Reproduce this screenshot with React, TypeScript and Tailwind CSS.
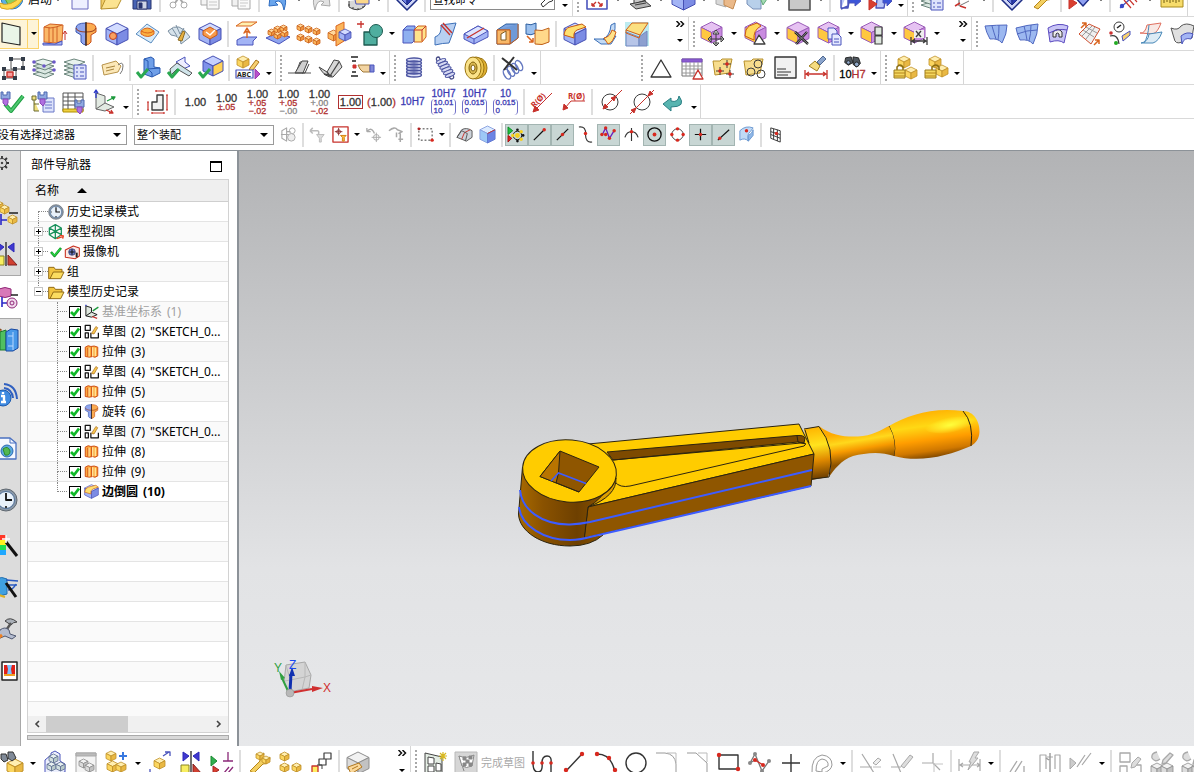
import type { ReactNode } from 'react'
import clsx from 'clsx'

const K = '#3c3c3c'
const B = '#4a54bc'
const R = '#c8322c'
const O = '#d9641e'
const G = '#a9a9a9'

const tones = {
  gold: ['#ffeeb0', '#fbd660', '#e9b843', '#bf9028'],
  blue: ['#d3dcff', '#a3b4f5', '#7c8ce4', '#4650b4'],
  orange: ['#ffd79a', '#fbb65c', '#f0933c', '#cc6420'],
  purple: ['#e6c2f2', '#ffc840', '#c98be0', '#9a5cb8'],
  gray: ['#f2f2f2', '#dcdcdc', '#c2c2c2', '#8e8e8e'],
  mixed: ['#c5d0ff', '#7f92ea', '#ffd257', '#4650b4'],
  steel: ['#e6efef', '#d0dede', '#b9caca', '#5c6c90']
}

const p = (d: string, stroke = K, fill = 'none', width = 1) => (
  <path d={d} stroke={stroke} fill={fill} strokeWidth={width} strokeLinejoin="round" />
)

const box = (x: number, y: number, s: number, tone: keyof typeof tones) => {
  const [top, left, right, edge] = tones[tone]
  const q = s / 4
  return (
    <g stroke={edge} strokeWidth={s > 12 ? 1 : 0.8} strokeLinejoin="round">
      <path fill={top} d={`M${x} ${y + q}L${x + 2 * q} ${y}L${x + s} ${y + q}L${x + 2 * q} ${y + 2 * q}Z`} />
      <path fill={left} d={`M${x} ${y + q}L${x + 2 * q} ${y + 2 * q}V${y + s}L${x} ${y + 3 * q}Z`} />
      <path fill={right} d={`M${x + s} ${y + q}L${x + 2 * q} ${y + 2 * q}V${y + s}L${x + s} ${y + 3 * q}Z`} />
    </g>
  )
}

const dot = (x: number, y: number, fill = '#d8281e', r = 1.8) => <circle cx={x} cy={y} r={r} fill={fill} />
const ring = (x: number, y: number, r: number, stroke = K, fill = 'none') => (
  <circle cx={x} cy={y} r={r} stroke={stroke} fill={fill} />
)

const tick = <>{p('M2 12l7 8L22 4', '#0c8a24', 'none', 5)}{p('M3 13l6 6L21 5', '#28d040', 'none', 3)}</>
const folder = p('M2 5h7l2-2h10l-3 14-14 2z', '#b7902c', '#f7dd8d')
const clip = <>{p('M1 2h2v3h4V2h3v7H1z', '#4f68b0', '#8fa9e0')}{p('M3 9h5v4l-2 3-3-3z', '#8a48b8', '#b070e0')}</>
const wrench = p('M3 20L13 10q-2-6 4-8l-1 5 3 2 4-3q0 7-7 7L7 22z', '#b5851a', '#f3cf60')
const layers = (
  <>
    {p('M1 18l10-3 11 3-9 4z', '#6b857c', '#dbe8e2')}
    {p('M1 14l10-3 11 3-9 4z', '#6b857c', '#dbe8e2')}
    {p('M1 10l10-3 11 3-9 4z', '#6b857c', '#cfe0d8')}
    {p('M1 6l10-3 11 3-9 4z', '#6b857c', '#e8f3ee')}
  </>
)

const glyphs: Record<string, ReactNode> = {
  start: <>{ring(13, 11, 11, '#2c78b8', '#5ab0e6')}{p('M5 10q6-5 14 2-1 8-8 9z', '#4e9e3a', '#8ccf5c')}{p('M0 16q12 5 23-8l1 4Q15 26 2 21z', '#d9a41c', '#ffd94e')}</>,
  newFile: p('M4 1h12l4 4v17H4z', '#6a6abf', '#eef0ff'),
  open: <>{p('M2 5h7l2 2h8v4L2 22z', '#b7902c', '#f2cf6a')}{p('M2 22l5-11h16l-5 10z', '#b7902c', '#fbe391')}</>,
  save: <>{p('M3 2h18v20H3z', '#28356e', '#4864b4')}{p('M7 14h10v8H7z', '#28356e', '#cfd6e6')}{p('M9 16h3v5H9z', '#28356e', '#28356e')}</>,
  cut: <>{p('M6 2l10 14M18 2L8 16', G, 'none', 2)}{ring(6, 18, 3, G)}{ring(17, 18, 3, G)}</>,
  copy: <>{p('M3 2h10v16H3z', G, '#f4f4f4')}{p('M9 7h12v15H9z', G, '#f8f8f8')}{p('M11 12h8M11 15h8M11 18h8', '#c8c8c8')}</>,
  paste: <>{p('M3 3h14v16H3z', G, '#f1f1f1')}{p('M9 8h12v14H9z', G, '#fafafa')}{p('M11 13h8M11 16h8M11 19h6', '#c8c8c8')}</>,
  undo: p('M4 10l-1 9 9-1-3-3q7-4 9 8Q24 4 8 11z', '#2f6cc0', '#6aa5ec'),
  redo: p('M20 10l1 9-9-1 3-3q-7-4-9 8Q0 4 16 11z', G, '#e2e2e2'),
  view: <>{p('M3 14v6q9 6 16-1v-7', K, '#d8d8d8', 1)}{p('M7 4h16v13H10z', B, '#fbd78a')}{p('M2 18h2m2 3h2m3 1h2m3-2h2', K)}</>,
  diamond: <>{p('M2 13l10-10 10 10-10 10z', '#1d2d86', '#cfd6f6', 1.5)}{p('M7 13l5-5v10z', '#1d2d86', '#6f80e0')}{p('M17 13l-5-5v10z', '#1d2d86', '#2a3bb0')}</>,
  fit: <>{p('M2 2h20v20H2z', B, '#fff', 1.6)}{p('M7 19l4-4M7 19v-3m0 3h3M17 19l-4-4M17 19v-3m0 3h-3', R, 'none', 1.4)}</>,
  laptop: <>{p('M6 4l12-3v12l-12 4z', K, '#c9c9c9')}{p('M2 17l6 5 15-3-6-5z', K, '#b5b5b5')}{p('M7 18l11-2', K)}</>,
  shaded: box(1, 0, 23, 'blue'),
  clipA: <>{p('M2 6l10-4v18l-10-3z', G, '#d8d8d8')}{p('M10 10l12 3-3 9-9-4z', '#c48a50', '#eab98a')}</>,
  clipB: <>{p('M2 6l14-4v20h-8l-6-5z', '#7890b8', '#b8d0ea')}{p('M14 8l8 4-4 6z', '#60a878', '#a5dbb4')}</>,
  swatch: p('M1 1h21v22H1z', '#555', '#c9c9c9', 1.6),
  exit: <>{p('M4 3h10l-3 18H4zM4 22l7-3V4', B, '#b9c6f7', 1.4)}{p('M12 12h6V9l6 5-6 5v-3h-6z', B, '#3c55d8')}</>,
  exitGo: <>{p('M10 3h9l-3 18H8z', B, '#b9c6f7', 1.4)}{p('M1 12l8 5-8 6z', R, '#d84030')}{p('M15 12h4V9l5 5-5 5v-3h-4z', B, '#3c55d8')}</>,
  layerList: <>{layers}{p('M11 9h12v14H11z', B, '#dde2fb')}{p('M13 12h2m2 0h4m-8 4h2m2 0h4m-8 4h2m2 0h4', B, 'none', 1.2)}</>,
  axes: <>{p('M8 4v15l10-5', '#777')}{p('M8 4v15M12 4l6 3', '#999')}{p('M4 19l5-3m0 3l6 2', R, 'none', 1.5)}</>,
  measure: <>{p('M2 3v6m20-6v6M3 6h18M6 4L3 6l3 2m12-4l3 2-3 2', R, 'none', 1.3)}{p('M1 12h22v8H1z', '#a98b1c', '#f7dc6b')}{p('M4 12v4m3-4v3m3-3v4m3-4v3m3-3v4m3-4v3', '#705c10')}</>,
  wrench,
  goDiamond: <>{p('M6 9l9-9 9 9-9 10z', '#1d2d86', '#8fa0f0', 1.4)}{p('M1 11l8 5-8 6z', R, '#d84030')}</>,
  needles: <>{p('M3 21L22 4', B, 'none', 1.3)}{p('M7 13l7 8M10 10l7 8m-4-11l7 8', R, 'none', 1.2)}{dot(5, 19, '#3848c8', 2.2)}</>,

  plane: p('M3 1l18 4v18L3 20z', '#222', '#eaf5e8', 1.2),
  extrude: <>{p('M1 5l6-3 13 1-1 16-6 2-12-1z', '#d06024', '#fbb868')}{p('M6 5v15M10 6v14M14 5v15M1 5l6 1 6-1 6-2', '#d06024')}{p('M0 21l12 1 7-3v4H0z', B, '#a3b4f5')}{p('M22 9v9m-2-6l2-3 2 3', R)}</>,
  revolve: <>{p('M12 1Q2 1 2 6v4l5 3v7q2 3 5 3z', '#3c58b0', '#8fa5ee')}{p('M12 1q10 0 10 5v4l-5 3v7q-2 3-5 3z', '#c8501c', '#fbac50')}{p('M2 6q1 4 10 4t10-4', '#9a4020')}{p('M12 0v24', '#222', 'none', 1.2)}</>,
  hole: <>{box(1, 1, 22, 'blue')}{ring(8, 14, 3.5, '#c04020', '#f9a060')}</>,
  boss: <>{p('M0 12L11 2l12 8-8 11z', '#5b8cc0', '#d8ecfa')}{p('M5 12v-3q6-6 13 0v3q-6 5-13 0z', '#d9641e', '#fbb040')}{p('M5 9q7 4 13 0', '#d9641e')}</>,
  pocketPlate: <>{p('M1 9Q12-2 23 15l-9 7Q14 14 4 13z', '#7c90a2', '#d6e2ea')}{p('M9 3l4 9M17 6l-4 6M5 6l5 8', '#7c90a2')}{p('M11 18l5-9 2 1-3 9z', '#8a6a20', '#e8b040')}</>,
  pocket: <>{box(1, 1, 22, 'blue')}{p('M5 9l7-4 7 4v4l-7 4-7-4z', '#c85a14', '#f99a4a')}{p('M8 10l4 3 5-5', '#fff', 'none', 1.5)}</>,
  emboss: <>{p('M1 4l6-4h15l-6 4z', O, '#fff0b0')}{p('M2 18l6-3h14l-4 4v4H2z', B, '#a3b4f5')}{p('M12 16V9l-3 2 3-5 3 5-3-2', O, 'none', 1.4)}</>,
  bed: <>{p('M0 16l11-5 13 4-11 7z', B, '#8fa5ee')}{box(2, 7, 7, 'orange')}{box(8, 4, 7, 'orange')}{box(14, 3, 7, 'orange')}{box(8, 10, 7, 'orange')}{box(15, 8, 7, 'orange')}</>,
  pattern: <>{box(0, 2, 7, 'orange')}{box(8, 4, 7, 'orange')}{box(16, 6, 7, 'orange')}{box(0, 12, 7, 'orange')}{box(8, 14, 7, 'orange')}{box(16, 16, 7, 'orange')}</>,
  mirrorGeo: <>{box(0, 8, 11, 'orange')}{p('M8 4l8-4v19l-8 5z', O, '#fbb65c')}{box(11, 7, 12, 'blue')}</>,
  unite: <>{p('M5 10h13v13H5z', '#1d5a50', '#4fae9f', 1.3)}{ring(17, 9, 6.5, '#1d5a50', '#4fae9f')}{p('M2-1v7M-2 2h7', R, 'none', 1.3)}</>,
  trimBox: <>{p('M1 8l4-4h8v14l-3 3H1z', B, '#8fb0f0')}{p('M12 8l4-4h8v11l-4 5h-8z', '#d06018', '#ffe38a')}{p('M1 8h11v12', B)}{p('M12 8h8v11M20 8l4-4', R)}</>,
  trimSheet: <>{p('M2 15Q9 13 8 3l15-2q-3 10-7 20Q10 21 2 23z', '#3d70b8', '#b8d0f2')}{p('M10 1l9 10M8 3l9 10', R, 'none', 1.4)}</>,
  split: <>{p('M0 12l14-8 10 5v6l-14 7-10-5z', B, '#a3b4f5')}{p('M0 12l14-8 10 5-14 8z', B, '#dce4ff')}{p('M10 17v5', B)}{p('M3 16L20 6', R, 'none', 1.3)}</>,
  shell: <>{p('M2 8l9-6h12v14l-8 6H2z', '#2c5ea0', '#7da4e0')}{p('M2 8h13v14l8-6V2', '#c05a18', '#6f9ad8')}{p('M2 8h13v14H2z', '#c05a18', '#f8b868')}{p('M6 12l5-3v9H6z', '#7f5a20', '#fff')}</>,
  wrap: <>{p('M0 2q5 2 10-1v10q-5 3-10 1z', '#2c5ea0', '#9bc0ee')}{p('M9 8q7 2 14-2v14q-7 4-14 2z', '#c06018', '#ffd88a')}{p('M1 14l6 6m0-4v4H3', O, 'none', 1.5)}</>,
  edgeBlend: <>{box(1, 1, 22, 'blue')}{p('M1 13Q2 6 7 5l12-3 4 3-9 3q-4 2-3 8z', '#c85a14', '#ffe070')}</>,
  faceBlend: <>{p('M0 17h10l12-3-5 8H7z', '#3d70b8', '#c4dbf5')}{p('M9 17Q16 14 17 3l4-2q1 12-6 19z', '#3d70b8', '#c4dbf5')}{p('M10 16q6-1 8-8l4 2q-3 11-8 12z', '#d06018', '#ffe38a')}</>,
  chamfer: <>{p('M0 0h24v24H0z', 'none', '#bdebf0')}{p('M1 10l13 5v9H1z', '#7088c0', '#b7c5e8')}{p('M14 15l8-6v15h-8z', '#7088c0', '#8da0d0')}{p('M1 8l6-7h16l-8 12z', '#d06018', '#fbe080')}{p('M1 8v3l13 5 1-3', '#d06018')}</>,
  moveFace: <>{box(0, 0, 21, 'purple')}{p('M15 10v14M8 17h14M15 8l-3 4h6zM15 24l-3-3h6zM7 17l3-3v6zM23 17l-3-3v6z', K, '#fff')}</>,
  pullFace: <>{box(1, 0, 21, 'purple')}{p('M1 14Q1 7 5 4l8-3 4 3Q9 8 10 18z', '#c85a14', '#ffd95c')}{p('M10 22l5-9 6 9z', K, '#fff', 1.3)}</>,
  deleteFace: <>{box(0, 0, 22, 'purple')}{p('M8 10l13 12M20 10L9 22', '#222', 'none', 2.4)}{p('M8 10l13 12M20 10L9 22', '#888', 'none', 1)}</>,
  copyFace: <>{box(0, 0, 21, 'purple')}{p('M10 6h6l3 3v8h-9z', B, '#e5e9ff')}{p('M14 12h6l3 3v8h-9z', B, '#e5e9ff')}{p('M16 17h5M16 20h5', B)}</>,
  editSection: <>{box(0, 0, 21, 'purple')}{p('M14 5h7v8h-7zM14 14h7v8h-7z', K, '#dfe8df', 1.2)}</>,
  dimFace: <>{box(0, 0, 21, 'purple')}{p('M10 8h10v8H10z', 'none', '#eee')}{p('M12 9l5 6M17 9l-5 6', K, 'none', 1.3)}{p('M7 15v8M23 15v8M8 19h14M11 17l-3 2 3 2m8-4l3 2-3 2', K, 'none', 1.3)}</>,
  sheetA: <>{p('M1 4q12-1 22-1 0 9-5 18-4-5-12-4Q2 10 1 4z', '#5068c0', '#9cb8f0')}{p('M8 4q2 7 4 13M15 3q0 9-1 15', '#5068c0')}</>,
  sheetB: <>{p('M1 6q11-3 22-4 0 10-5 20-4-5-13-4Q2 12 1 6z', '#5068c0', '#9cb8f0')}{p('M9 4q2 7 3 14M16 3q0 9-2 16M2 12q10-4 20-4', '#5068c0')}</>,
  sheetC: <>{p('M2 6Q12 0 22 4q-2 8-4 17-5-4-14-1Z', '#5a4ac0', '#c8c4f6')}{p('M7 15v-5q5-5 9 0v5h-3v-3q-2-2-3 0v3z', '#333', '#eee')}{p('M3 11q10-5 18-3', '#5a4ac0')}</>,
  sheetD: <>{p('M2 12L12 2l11 5-9 15z', '#d05030', '#f0f0f0')}{p('M5 14L15 4M9 17l9-12M6 8l11 7M9 5l11 6', '#999')}{p('M4 6l5-5m-4 0h4v4M17 23l5-5m-4 0h4v4', O, 'none', 1.5)}</>,
  sheetE: <>{ring(11, 5, 5)}{p('M9 6l4-3', '#222', 'none', 1.5)}{p('M2 14q8-2 9 8', K, 'none', 1.2)}{dot(3, 11, '#c33')}{dot(8, 21, '#2a2', 2)}{p('M14 14l8-5v4l-7 6z', B, '#f6d070')}</>,
  sheetF: <>{p('M1 11q5 1 7-8l14-2q-3 9-8 11z', '#e07060', '#f8e8e4')}{p('M2 21q7-1 8-9l13-2q-3 9-9 11z', '#4888b8', '#dcebf5')}{p('M10 3q-1 12-5 18', '#4888b8')}</>,
  sheetG: <>{p('M1 6q7 3 10-2 5-4 13 0-1 4-2 12-8-2-10 4-7 3-8-4z', '#555', '#e0e0e0')}{p('M11 14q6-5 12-2l-2 5q-7-2-9 5z', B, '#a3b4f5')}</>,

  group: <>{p('M3 14h12v8H3zM10 3h12v10H10z', '#555')}{p('M6 16h6v5H6z', R, '#f8a0a0', 1.4)}{[[3, 13], [14, 13], [3, 22], [14, 22], [10, 3], [22, 3], [22, 12]].map(([x, y]) => <rect key={`${x}-${y}`} x={x - 2} y={y - 2} width="4" height="4" fill="#333c48" />)}</>,
  layers: <>{layers}{dot(2, 6, '#6b58c8')}{dot(22, 6, '#6b58c8')}{dot(2, 14, '#6b58c8')}{dot(22, 14, '#6b58c8')}{dot(12, 10, '#6b58c8')}</>,
  tag: <>{p('M2 9l14-4 5 5-3 6-14 3z', '#b8944c', '#fce8b8')}{p('M6 12l9-2M6 15l8-2', '#a8843c')}{p('M18 9q5-4 5 1t-3 8', '#777')}</>,
  partOk: <>{p('M7 3l7-2 3 2v8l6 1v5l-8 4-8-3z', '#2858b0', '#6f9fe8')}{p('M7 3l4 2v8l12-1M11 13l4 4v4', '#2858b0')}{p('M0 16l4 5 7-8', '#2aa850', 'none', 3)}</>,
  paintOk: <>{p('M8 6l9-5v5l5 4-7 3-4-5z', B, '#eef')}{p('M2 13l7-6 15 10-3 3-12-7-6 6z', '#555', '#d0e4ea')}{p('M0 16l4 5 7-8', '#2aa850', 'none', 3)}</>,
  boxOk: <>{box(4, 0, 20, 'mixed')}{p('M0 16l4 5 7-8', '#2aa850', 'none', 3)}</>,
  abc: <>{box(1, 0, 12, 'gold')}{p('M14 12l6-8 3 2-6 8-4 1z', '#a8741c', '#f7d070')}{p('M0 14h17v8H0z', B, '#fff', 1.2)}<text x="1" y="21" fontSize="7" fontWeight="700" fill="#222">ABC</text>{p('M19 13l5 5-5 5z', '#9a38b0', '#b850cc')}</>,
  weldA: <>{p('M0 17h8l4-11h8M14 17h9', '#555')}{p('M7 17L14 5h6l-5 12z', '#444', '#cfcfcf')}{p('M8 17h9l4-9', '#444')}</>,
  weldB: <>{p('M0 11l8 5L15 4l5 1 3 6-9 10q-8 1-14-10z', '#444', '#d6d6d6')}{p('M8 16l3 4 9-14M5 18l8 2', '#444', 'none', 1.3)}</>,
  hand: <>{p('M1 1h7M2 5h4M2 16h4M1 20h7', '#222', 'none', 1.6)}{p('M3 9h3v3H3z', R, '#d83030')}{p('M8 9h9l3 0v7h-7l-3-3z', '#a07838', '#f2d4a2')}{p('M20 9h4v7h-4z', B, '#8088d8')}</>,
  spring: <>{p('M4 3v18h15V3z', 'none', '#dfe2f8')}{[4, 7, 10, 13, 16, 19].map(y => <ellipse key={y} cx="12" cy={y} rx="7.5" ry="2" fill="none" stroke="#4a53a0" strokeWidth="1.3" />)}</>,
  springB: <>{p('M4 5q-2-4 2-4l2 4M15 20l3 3q4 0 2-4', '#4a4f88', 'none', 1.3)}{[0, 1, 2, 3, 4, 5].map(i => <ellipse key={i} cx={8 + i * 1.8} cy={5 + i * 2.8} rx="5" ry="1.7" transform={`rotate(-22 ${8 + i * 1.8} ${5 + i * 2.8})`} fill="#d5d8f2" stroke="#4a53a0" />)}</>,
  disc: <><ellipse cx="15" cy="12" rx="8" ry="10" fill="#e0b030" stroke="#9a7410" /><ellipse cx="12" cy="12" rx="8" ry="11" fill="#ecc650" stroke="#9a7410" /><ellipse cx="9" cy="12" rx="8" ry="11" fill="#fbe38a" stroke="#9a7410" /><ellipse cx="9" cy="12" rx="4" ry="6" fill="#d9b850" stroke="#806008" /><ellipse cx="9" cy="12" rx="2" ry="3" fill="#fff" stroke="#806008" /></>,
  springCut: <>{[0, 1, 2, 3].map(i => <ellipse key={i} cx={6 + i * 4} cy={18 - i * 2.8} rx="3" ry="5.5" transform={`rotate(-28 ${6 + i * 4} ${18 - i * 2.8})`} fill="none" stroke="#6478c0" strokeWidth="1.4" />)}{p('M1 2l15 12M13 1L3 14', '#333', 'none', 2)}</>,
  triangle: p('M2 21L12 4l10 17z', '#333', '#fff', 1.3),
  grid: <>{p('M2 3h20v17H2z', '#777', '#fff')}{p('M2 3h20v3H2z', '#7a4cc0', '#8a5cd0')}{p('M2 10h20M2 13h20M2 17h20M6 6v14M10 6v14M14 6v14M18 6v14', '#999')}{p('M13 23l5-9 5 9z', R, '#fff', 1.3)}</>,
  folderPts: <>{folder}{p('M16 4v8m-4-4h8M9 11v8m-4-4h8M19 14v8m-4-4h8', K)}{dot(16, 8)}{dot(9, 15)}{dot(19, 18)}</>,
  folderRings: <>{folder}{ring(16, 8, 4)}{ring(9, 16, 4)}{ring(19, 18, 4)}</>,
  note: <>{p('M2 1h21v21H2z', '#333', '#f1f1f1', 1.4)}{p('M4 13h9M4 16h14M4 19h11', '#333', 'none', 1.2)}</>,
  brush: <>{p('M13 6l6-6 3 3-6 6z', '#506890', '#8aa4cc')}{p('M5 10l6-5 5 5-3 5z', '#a08020', '#f5dc80')}{p('M1 14v9m22-9v9M2 18h20M5 16l-3 2 3 2m14-4l3 2-3 2', R, 'none', 1.3)}</>,
  lockA: <>{box(5, 0, 12, 'gold')}{box(12, 11, 12, 'gold')}{p('M4 14v-3q3-4 6 0v3', '#8a6c10', 'none', 1.5)}{p('M1 14h11v8H1z', '#9a7c20', '#f4d860')}{p('M1 17h11M1 20h11', '#b5851a')}</>,
  lockB: <>{box(5, 0, 12, 'gold')}{box(12, 9, 12, 'gold')}{p('M8 14v-3q4-4 7 0v3', '#8a6c10', 'none', 1.5)}{p('M1 14h11v8H1z', '#9a7c20', '#f4d860')}{p('M1 17h11M1 20h11', '#b5851a')}</>,

  clipOk: <>{p('M5 14l6 7L23 6', '#1fa044', 'none', 4)}{p('M5 14l6 7L23 6', '#4fc870', 'none', 2)}{clip}</>,
  clipTree: <>{p('M1 6h4v4H1zM3 10v11h5M3 14h5', '#6a6a30', '#f0e080')}{p('M12 8h11v14H12z', '#6a78c8', '#dde3fb')}{p('M14 12h7M14 15h7M14 18h7', '#6a78c8')}<g transform="translate(6 0)">{clip}</g></>,
  clipTable: <>{p('M1 3h20v18H1z', '#555', '#fff')}{p('M1 19h20v3H1z', '#b09000', '#f0d040')}{p('M1 7h20M1 11h20M1 15h20M6 3v16M13 3v16', '#555')}<g transform="translate(12 8)">{clip}</g></>,
  datum: <>{p('M3 3v16l9-6V6zM3 19l9 2 9-4-9-4', '#666', '#e2eae2')}{p('M3 8V0M1 3l2-3 2 3', '#2a38c8', 'none', 1.3)}{p('M14 11l8-4m-4 0l4 0-2 3', '#1c9a3c', 'none', 1.3)}{p('M13 20l7 3m-2-3l2 3-4 0', R, 'none', 1.3)}</>,
  profileDim: <>{p('M7 20v-8h5V5h6v15z', K, '#f1f1f1', 1.4)}{p('M11 1h8m-8-1v2m8-2v2M22 5v15m-1-15h2m-2 15h2M3 12v8m-1-8h2m-2 8h2M7 23h12m-12-1v2m12-2v2', R, 'none', 1.2)}</>,
  radA: <>{p('M21 3L3 21', R)}{p('M2 22l2-6 4 4z', R, R)}<text x="1" y="15" fontSize="8" fontWeight="700" fill={R} transform="rotate(-45 6 14)">R(Ø)</text></>,
  radB: <>{p('M23 11H9l-6 7', R)}{p('M1 20l1-6 4 4z', R, R)}<text x="6" y="9" fontSize="8" fontWeight="700" fill={R}>R(Ø)</text></>,
  diaIn: <>{ring(11, 12, 8)}{p('M5 18L23 0', R)}{p('M4 19l2-5 3 3zM17 6l-5 2 3 3z', R, R)}</>,
  diaOut: <>{ring(12, 12, 8)}{p('M0 24L24 0', R)}{p('M6 18l-5 2 3 3zM18 6l5-2-3-3z', R, R)}</>,
  back: p('M2 14l8-6v3q7 2 8-5 8 11-8 11v4z', '#2b7f84', '#58b4b0'),

  person: <>{box(7, 8, 16, 'gold')}{p('M1 3h5l2 6-4 2-3-3zM8 1h5l3 6-4 3-4-3z', '#333', '#808a98')}</>,
  parts: <>{p('M2 9l6-5V2l4-2 5 3v7l5 3v8l-7 2H2z', B, '#eceffd')}{box(6, 3, 9, 'steel')}{box(4, 11, 9, 'steel')}{box(13, 11, 9, 'steel')}</>,
  partsOff: <>{p('M2 2h20v21H2z', G, '#f4f4f4')}{p('M2 2h20v3H2z', G, '#bbb')}{box(5, 8, 9, 'gray')}{box(11, 12, 9, 'gray')}</>,
  addPart: <>{box(1, 0, 10, 'gold')}{box(2, 10, 11, 'gold')}{box(11, 11, 10, 'gold')}{p('M18 1v8M14 5h8', '#3878e0', 'none', 2)}</>,
  movePart: <>{box(6, 7, 11, 'gold')}{p('M15 5l6-4m-4 0h5v4M8 22l-6 0v-4', B, 'none', 1.3)}</>,
  mirror: <>{p('M4 1v9l6-5zM20 1v9l-6-5z', '#2a28b8', '#4038d0')}{p('M12 0v24', '#222', 'none', 1.3)}{p('M2 14h8v9H2z', '#8a8420', '#f8ee60')}{p('M14 13l9 10h-9z', '#802020', '#d04030')}</>,
  constrain: <>{p('M1 5l6 5-6 5z', '#1c8a30', '#30b050')}{p('M3 15l6 4-6 4z', '#a02020', '#d84030')}{p('M18 1v9M13 10h10M14 22l5-6M18 22l5-6', '#8a2878', 'none', 1.3)}</>,
  wrenchPart: <>{wrench}{box(9, 1, 8, 'gold')}{box(15, 5, 8, 'gold')}</>,
  threeParts: <>{box(2, 1, 9, 'gold')}{box(2, 12, 9, 'gold')}{box(14, 12, 9, 'gold')}</>,
  chain: <>{p('M15 2h7v6h-7zM10 8h7v6h-7z', K, '#fff', 1.2)}{p('M3 15h6v7H3z', R, '#ffee60', 1.3)}{p('M8 14h5v4', K)}</>,
  boxNote: <>{box(1, 1, 22, 'gray')}{p('M2 16l11-4 3 4-11 7z', '#b07820', '#fbd89a')}{p('M6 18l6-3', '#b07820')}</>,
  sketch: <>{p('M2 2l17 4v18H2z', '#444', '#e4ede4')}{p('M5 6l6 1v6H5zM5 15h6v6H5zM13 12l5 1v7h-5z', '#444', '#fff')}{p('M20 1v9M16 5h8M17 2l6 6M23 2l-6 6', '#d8b820', 'none', 1.2)}</>,
  flag: <>{p('M1 1h22v22H1z', '#b8b8b8', '#d6d6d6')}{p('M5 5l5 15', '#888')}{p('M5 5q8 3 15-1l-2 11q-6 3-10 0z', '#888', '#fff')}{p('M9 6h3v3H9zM15 5h3v3h-3zM12 9h3v3h-3zM9 12h3v3H9zM15 12h3v3h-3z', '#888', '#888')}</>,
  spline: <>{p('M2 0v12q0 9 5 9t4-9q0-7 5-7t4 7v10', '#333', 'none', 1.4)}{dot(2, 12)}{dot(11, 12)}{dot(20, 12)}</>,
  line: <>{p('M4 20L20 3', '#333', 'none', 1.4)}{dot(20, 3, '#d8281e', 2.2)}{dot(4, 19, '#d8281e', 2.2)}</>,
  arc: <>{p('M4 3q15 0 18 19', '#333', 'none', 1.4)}{dot(4, 3, '#d8281e', 2.2)}{dot(16, 7, '#d8281e', 2.2)}{dot(22, 19, '#d8281e', 2.2)}</>,
  circle: <circle cx="12" cy="12" r="10" fill="none" stroke="#333" strokeWidth="1.4" />,
  fillet: <>{p('M1 2h9q10 1 11 11v9', '#999')}{p('M12 2h9v10', '#bbb')}</>,
  chamferLine: <>{p('M1 2h9l11 10v10', '#999')}{p('M12 2h9v9', '#bbb')}</>,
  rect: <>{p('M2 4h19v14H2z', '#333', 'none', 1.4)}{dot(2, 4, '#d8281e', 2.2)}{dot(21, 18, '#d8281e', 2.2)}</>,
  poly: <>{p('M2 12l5-9 7 17 7-10M2 12l5-3', '#777', 'none', 1.3)}{p('M7 9l8 5', R, 'none', 1.4)}{dot(2, 12, '#888', 2)}{dot(7, 3, '#888', 2)}{dot(7, 9, '#d8281e', 2)}{dot(15, 14, '#d8281e', 2)}{dot(21, 10, '#888', 2)}{dot(14, 20, '#888', 2)}</>,
  plus: p('M12 3v18M3 12h18', '#333', 'none', 1.4),
  offset: <>{p('M2 22q-1-16 10-18 10 1 10 10-1 6-9 8z', '#999')}{p('M6 20q0-11 6-12 7 1 6 7l-6 3v3z', '#999')}</>,
  trim: <>{p('M3 3l12 19M1 16h12', G, 'none', 1.2)}{p('M14 12l5-5 3 2-5 5z', G, '#eee')}{p('M14 16h8', '#bbb')}</>,
  extend: <>{p('M3 3l8 19M1 16h10', G, 'none', 1.2)}{p('M11 15l9-11 3 2-9 11z', G, '#ddd')}</>,
  corner: <>{p('M1 12h11l7 7M12 2v10', G, 'none', 1.2)}{p('M12 13h10M13 12v10', '#c4c4c4')}</>,
  autoDim: <>{p('M1 8v12M22 8v12M2 14h20M5 12l-3 2 3 2m14-4l3 2-3 2', G, 'none', 1.2)}{p('M11 11l5-10 5 0-4 6h3L10 19l3-8z', G, '#ddd')}</>,
  parallel: p('M3 21l7-11M8 21l7-11M17 22v-7', G, 'none', 1.3),
  symmetric: <>{p('M2 22V4h6v14M22 22V4h-5v14M9 6h6', G, 'none', 1.2)}{p('M12 2v22M8 7l3 2', '#999', 'none', 1.4)}</>,
  goParallel: <>{p('M1 7l6 5-6 6z', G, '#ccc')}{p('M8 16l8-12M13 14L22 2', G, 'none', 1.2)}</>,
  sketchOff: <>{p('M2 2h10v9H2zM2 15h7v8H2zM14 14h9v9', G, 'none', 1.3)}{p('M14 12l6-6 3 2-6 8-4 1z', G, '#ddd')}</>,
  replace: <>{p('M8 1q-6 1-5 6 3 5 8 1M14 9l7-7 3 2-7 8-4 1z', G, '#ddd', 1.3)}{box(2, 12, 12, 'gray')}{box(12, 12, 12, 'gray')}</>,

  navGear: <>{ring(12, 12, 4.5, '#333')}{ring(12, 12, 0.8, '#333', '#333')}{p('M12 5v2M12 17v2M5 12h2M17 12h2M7 7l2 2M15 15l2 2M7 17l2-2M15 9l2-2', '#333', 'none', 1.8)}</>,
  navAssembly: <>{box(0, 1, 9, 'gold')}{box(6, 5, 9, 'gold')}{p('M15 13h9', '#111', 'none', 1.4)}{p('M7 14v11M7 20h6', '#2a28c8', 'none', 1.6)}{box(14, 15, 9, 'gold')}</>,
  navPart: <>{p('M5 4q6-3 12 0v7q-6 3-12 0z', '#902878', '#d878b8')}{p('M17 10h7', '#111', 'none', 1.4)}{p('M8 12v10M8 18h6', '#2a28c8', 'none', 1.6)}{ring(18, 18, 5, '#902878', '#f0d8ec')}{ring(18, 18, 2, '#902878')}</>,
  navBooks: <>{p('M1 4l6-3v20H1z', '#804010', '#f0a060')}{p('M6 4l6-2v20H6z', '#1c7a2c', '#50c060')}{p('M12 4l5-3 7 1v18l-5 3h-7z', '#1848a0', '#4898e8')}{p('M14 8h5M14 18h5M19 4v18', '#b8d8ff')}</>,
  navInfo: <>{ring(9, 15, 8, '#1c5cb0', '#3f8ae0')}{p('M9 9v2m-2 2h3v6m-3 0h5', '#fff', 'none', 2.4)}{p('M10 1q12 1 13 15M10 5q8 1 9 10', '#3060c0', 'none', 2)}</>,
  navWeb: <>{p('M2 1h14l6 5v16H2z', '#4a70c0', '#f5f8ff', 1.3)}{ring(13, 14, 6, '#2a6ab0', '#5ca8e0')}{p('M9 12q5-4 7 2 0 5-5 4z', '#2c8a30', '#54b850')}{p('M16 1v5h6', '#4a70c0')}</>,
  clock: <>{ring(12, 12, 11, '#606870', '#8a98a8')}{ring(12, 12, 8.5, '#4f6f98', '#e8f1fa')}{p('M12 5v7h6', '#111', 'none', 1.8)}{p('M12 18v2M5 12h1', '#111', 'none', 1.6)}</>,
  navPalette: <>{p('M0 2h12v5H0z', 'none', '#ff3828')}{p('M0 7h12v5H0z', 'none', '#fff020')}{p('M0 12h12v5H0z', 'none', '#20e050')}{p('M0 17h12v5H0z', 'none', '#20a8ff')}{p('M12 9l11 14', '#111', 'none', 3)}{p('M12 2v8M8 6h8', '#fff', 'none', 1.4)}</>,
  navScene: <>{p('M2 4q6-3 11 0v15q-6 3-11 0z', '#2470b0', '#40a0e0')}{p('M12 5l12 1M14 10h9M14 15q5 0 8-6', '#2858c0', 'none', 1.6)}{p('M12 8l10 14', '#111', 'none', 3)}{p('M5 20l6 2', '#e0b020', 'none', 2)}</>,
  navTools: <>{p('M11 4q5-5 12 1-4 0-6 3z', '#444', '#aab0b8')}{p('M17 6l-6 9', '#555', 'none', 2.4)}{p('M6 13q5-4 9 0l1 4 6 2-4 3-7-3-7 3q0-5 2-9z', '#4f5870', '#b4bccf')}{p('M3 22l5-4', '#f08020', 'none', 3)}</>,
  navMedia: <>{p('M4 4l-3 3v13l3 3z', '#444', '#ddd')}{p('M8 3h15v18H8z', '#222', '#fff', 1.5)}{p('M10 6h11v10H10z', 'none', '#e02018')}{p('M13 6h5l-1 4 1 6h-5l1-6z', 'none', '#7cc4ff')}{p('M10 16h11', '#f0a020', 'none', 2)}</>,

  modelView: <>{p('M2 6l9-5 9 5v10l-9 6-9-6zM2 6l9 5 9-5M11 11v10M11 2v9M2 16l9-5 9 5', '#16905a', 'none', 1.9)}{p('M13 22l9-3M18 17l5 1-1 4', '#e84020', 'none', 2)}</>,
  tick,
  camera: <>{p('M2 9l12-6 9 3v12l-6 4-15-2z', '#c83020', '#fbe8e4', 1.6)}{ring(12, 12, 5, '#223070', '#7080c8')}{p('M12 8v8M8 12h8', '#111', 'none', 1.6)}{p('M19 13v7', '#222', 'none', 3)}</>,
  folder: <>{p('M1 5h8l2 3h10v6L3 22H1z', '#8a6410', '#f2c440', 1.4)}{p('M3 22l5-10h16l-5 10z', '#8a6410', '#fbdc60', 1.4)}</>,
  datumTree: <>{p('M3 3v16l9-6V6zM3 19l9 2 9-4-9-4', '#222', '#dfe8df', 1.6)}{p('M3 3v-2', '#2a38c8', 'none', 2)}{p('M14 11l9-6', '#1c9a3c', 'none', 2)}{p('M13 20l8 3', R, 'none', 2)}</>,
  sketchTree: <>{p('M2 2h8v8H2zM2 14h5v8H2zM11 14v8h12v-8', '#111', '#fff', 2)}{p('M12 15l7-11 3 2-6 10z', '#a06010', '#f8c850')}</>,
  extrudeTree: <>{p('M2 5q5-4 9-1 5-2 11 1v14q-5 4-8 1-5 2-12 0z', '#d05018', '#fca83c', 1.6)}{p('M8 6v14M14 5v15M18 6v13', '#fff0b0', 'none', 1.8)}{p('M6 6v14M12 5v15', '#d05018', 'none', 1.4)}</>
}

// 18px icons of the selection bar
const snaps: Record<string, ReactNode> = {
  assyFilter: <>{p('M2 5l5-3v14l-5-3zM7 6h4M1 9h9', G, 'none', 1.2)}{ring(13, 5, 3, G)}{ring(12, 12, 4, G, '#eee')}</>,
  reset: <>{p('M1 5h8q2 0 1 4M1 5l3-3M1 5l3 3', '#bbb', 'none', 1.6)}{p('M8 9h8l-3 4v4h-2v-4z', '#bbb', '#ddd')}</>,
  filter: <>{p('M1 1h16v16H1z', R, '#fff', 1.4)}{ring(7, 6, 2, '#8a3030')}{p('M7 2v8M3 6h8', '#8a3030')}{p('M9 10h6l-2 2v4h-2v-4z', '#d08010', '#ffc040')}</>,
  undoSel: <>{p('M2 6q5-6 8 2M2 6V2m0 4h4', G, 'none', 1.4)}{ring(12, 12, 3, G)}{p('M12 7v10M7 12h10', G)}</>,
  brushSel: <>{p('M1 5q6-5 9-1l5 2-4 2M9 7v5M13 8v9M11 14h5', G, 'none', 1.6)}</>,
  marquee: <><rect x="2" y="3" width="14" height="12" fill="none" stroke="#333" strokeDasharray="2 2" />{dot(2, 3, '#b02020', 1.5)}{dot(16, 15, '#d8281e', 1.8)}</>,
  roundBox: <>{p('M1 12L6 4q5-3 11 1v7l-6 4z', '#555', '#cdd3da')}{p('M6 14L9 7l6-3', R)}{p('M1 12l5-7 6 3-2 8', '#555')}</>,
  cube: <>{p('M1 4l8-4 8 4-8 4z', '#88a0e0', '#dcebff')}{p('M1 4l8 4v10l-8-4z', '#88a0e0', '#9cc8f6')}{p('M17 4L9 8v10l8-4z', '#6078d0', '#6c84e4')}{p('M9 8l8-4', R)}</>,
  snapAll: <>{p('M0 1l5 4-5 4z', '#0a8a20', '#20c040')}{p('M0 10l4 3-4 4z', '#a01010', '#e02020')}{ring(10, 10, 4.5, '#111')}{dot(10, 10, '#f5d020', 2.6)}{dot(10, 4, '#111', 1.4)}{dot(16, 10, '#111', 1.4)}{dot(10, 16, '#111', 1.4)}{dot(5, 10, '#f5d020', 1.8)}{dot(14, 6, '#f5d020', 1.8)}{dot(14, 14, '#f5d020', 1.8)}</>,
  end: <>{p('M3 15L14 4', '#111', 'none', 1.3)}{dot(14, 4)}</>,
  mid: <>{p('M3 15L15 3', '#111', 'none', 1.3)}{dot(9, 9)}</>,
  curve: <>{p('M2 1q8-1 7 8 0 9 7 8', '#333', 'none', 1.2)}{dot(9, 8)}</>,
  pole: <>{p('M2 10l4-8 4 11 5-8', '#6a20c0', 'none', 1.4)}{dot(2, 9)}{dot(6, 2)}{dot(10, 13)}{dot(6, 9)}{dot(15, 5)}</>,
  intersect: <>{p('M9 2v14M2 12q2-6 7-6 5 0 7 6', '#333', 'none', 1.2)}{dot(9, 6)}</>,
  center: <><circle cx="9" cy="9" r="7" fill="none" stroke="#111" strokeWidth="1.4" />{dot(9, 9, '#d8281e', 2)}</>,
  quadrant: <>{ring(9, 9, 6)}{dot(9, 3)}{dot(9, 15)}{dot(3, 9)}{dot(15, 9)}</>,
  point: <>{p('M9 3v12M3 9h12', '#111', 'none', 1.3)}{dot(9, 9)}</>,
  onCurve: <>{p('M3 15L15 4', '#111', 'none', 1.3)}{dot(5, 13)}</>,
  onFace: <>{p('M2 5q6-6 14-3l-3 4q-4 3-2 10-4-4-9-1z', '#6a98d0', '#c0daf5')}{p('M11 10q4-2 5-6v6l-5 6z', '#6a98d0', '#90b8e8')}{dot(9, 5)}</>,
  gridSnap: <>{p('M4 2l10 3v12L4 13zM7 3v11M11 4v12M4 6l10 3M4 9l10 4', '#333')}{dot(10, 8)}</>
}

function Glyph ({ name, className = 'size-6' }: { name: string, className?: string }) {
  return (
    <svg viewBox="0 0 24 24" fill="none" className={clsx('shrink-0 overflow-visible', className)} aria-hidden>
      {glyphs[name]}
    </svg>
  )
}

function Caret ({ low = false }: { low?: boolean }) {
  return (
    <button aria-label="more options" className={clsx('flex h-full w-3 shrink-0 items-center justify-center', low && 'pt-3')}>
      <span className="border-x-3 border-t-3 border-x-transparent border-t-black" />
    </button>
  )
}

// '|' separator, '^' drop-down arrow, 'v' arrow at the end of a bar
function Tools ({ items }: { items: string }) {
  return items.split(' ').map((item, i) => {
    if (item === '|') return <span key={i} className="mx-0.5 h-6.5 w-0.5 shrink-0 bg-[#dedede]" />
    if (item === '^' || item === 'v') return <Caret key={i} low={item === 'v'} />
    return (
      <button key={i} aria-label={item} className="flex h-full w-[31px] shrink-0 items-center justify-center">
        <Glyph name={item} />
      </button>
    )
  })
}

function Grip () {
  return <span className="mr-0.5 ml-1 h-6.5 w-0.5 shrink-0 bg-[repeating-linear-gradient(to_bottom,#a8a8a8_0,#a8a8a8_2px,transparent_2px,transparent_4px)]" />
}

function Bar ({ children, className, grip = true }: { children: ReactNode, className?: string, grip?: boolean }) {
  return (
    <div className={clsx('flex h-full shrink-0 items-center border-r border-[#d6d6d6]', className)}>
      {grip && <Grip />}
      {children}
    </div>
  )
}

function More () {
  return (
    <button aria-label="overflow" className="ml-auto flex h-full w-4 shrink-0 flex-col items-center justify-between pt-1 pb-2">
      <svg viewBox="0 0 9 6" className="h-1.5 w-2.5" fill="none" stroke="#111" strokeWidth="1.5"><path d="M1 0l3 3-3 3M5 0l3 3-3 3" /></svg>
      <span className="border-x-3 border-t-3 border-x-transparent border-t-black" />
    </button>
  )
}

function Tolerance ({ main = '1.00', lines, tone = 'red', variant }: { main?: string, lines?: string[], tone?: string, variant?: string }) {
  const blue = tone === 'blue'
  return (
    <button className={clsx('flex h-full w-[31px] shrink-0 flex-col items-center justify-center font-[Liberation_Sans] whitespace-nowrap', blue ? 'text-[#3c3cb4]' : 'text-[#333]')}>
      <span className={clsx('[-webkit-text-stroke:0.3px]', lines ? 'leading-[10px]' : 'leading-3', blue ? 'text-[10px]' : 'text-[11px]', variant === 'boxed' && 'border border-[#b03030] px-px')}>
        {variant === 'paren' ? <><b className="font-normal text-[#b03030]">(</b>{main}<b className="font-normal text-[#b03030]">)</b></> : main}
      </span>
      {lines && (
        <span className={clsx('leading-2 [-webkit-text-stroke:0.3px]', blue ? 'rounded-sm border-x border-[#7070c8] px-px text-left text-[8px]' : 'text-[9px]')}>
          {lines.map(line => (
            <span key={line} className={clsx('block', !blue && (line.endsWith('.00') ? 'text-[#888]' : 'text-[#b03030]'))}>{line}</span>
          ))}
        </span>
      )}
    </button>
  )
}

function Combo ({ label, value, className }: { label: string, value: string, className: string }) {
  return (
    <div className={clsx('relative h-5 shrink-0', className)}>
      <select aria-label={label} className="h-full w-full appearance-none border border-[#9a9a9a] bg-white px-0.5 text-[11px] leading-4 text-black">
        <option>{value}</option>
      </select>
      <span className="pointer-events-none absolute top-2 right-1.5 border-x-4 border-t-4 border-x-transparent border-t-black" />
    </div>
  )
}

function Snaps ({ items }: { items: string }) {
  return items.split(' ').map((item, i) => {
    if (item === '|') return <span key={i} className="mx-0.5 h-6 w-0.5 shrink-0 bg-[#dedede]" />
    if (item === '^') {
      return (
        <button key={i} aria-label="more options" className="flex w-2.5 shrink-0 justify-center">
          <span className="border-x-3 border-t-3 border-x-transparent border-t-black" />
        </button>
      )
    }
    const on = item.endsWith('*')
    const name = item.replace('*', '')
    return (
      <button
        key={i}
        aria-label={name}
        aria-pressed={on}
        className={clsx('flex h-[22px] w-[23px] shrink-0 items-center justify-center border', on ? 'border-[#a3b5b2] bg-[#c8d6d4]' : 'border-transparent')}
      >
        <svg viewBox="0 0 18 18" fill="none" className="size-[17px] overflow-visible" aria-hidden>{snaps[name]}</svg>
      </button>
    )
  })
}

const views = [
  { icon: 'clock', text: '历史记录模式' },
  { icon: 'modelView', text: '模型视图', expander: '+' },
  { icon: 'camera', text: '摄像机', expander: '+', checked: true },
  { icon: 'folder', text: '组', expander: '+' },
  { icon: 'folder', text: '模型历史记录', expander: '-' }
]

const features = [
  { icon: 'datumTree', text: '基准坐标系 (1)', dim: true },
  { icon: 'sketchTree', text: '草图 (2) "SKETCH_0...' },
  { icon: 'extrudeTree', text: '拉伸 (3)' },
  { icon: 'sketchTree', text: '草图 (4) "SKETCH_0...' },
  { icon: 'extrudeTree', text: '拉伸 (5)' },
  { icon: 'revolve', text: '旋转 (6)' },
  { icon: 'sketchTree', text: '草图 (7) "SKETCH_0...' },
  { icon: 'extrudeTree', text: '拉伸 (8)' },
  { icon: 'extrudeTree', text: '拉伸 (9)' },
  { icon: 'edgeBlend', text: '边倒圆 (10)', bold: true }
]

function Branch ({ first = false, last = false }: { first?: boolean, last?: boolean }) {
  return (
    <span className="flex h-full w-[10px] shrink-0 flex-col">
      <span className={clsx('h-1/2 border-b border-dotted border-[#888]', !first && 'border-l')} />
      <span className={clsx('h-1/2 border-dotted border-[#888]', !last && 'border-l')} />
    </span>
  )
}

const row = 'flex h-5 shrink-0 items-center overflow-hidden border-b border-[#e4e4e4] whitespace-nowrap even:bg-[#fafafa]'

function PartNavigator () {
  return (
    <section className="flex w-[218px] shrink-0 flex-col border-r-2 border-[#8c9298] bg-white text-[12px]">
      <header className="flex h-7 shrink-0 items-center justify-between pr-[15px] pl-2.5">
        <h2>部件导航器</h2>
        <button aria-label="maximize" className="mt-0.5 h-[11px] w-3 border border-t-2 border-black" />
      </header>
      <div className="mr-2 ml-1.5 flex min-h-0 flex-1 flex-col border border-[#d2d2d2]">
        <div className="flex h-[22px] shrink-0 items-center gap-4.5 border-b border-[#cfcfcf] bg-[#efefef] pl-[7px]">
          名称
          <span className="border-x-5 border-b-5 border-x-transparent border-b-black" />
        </div>
        <ul className="flex min-h-0 flex-1 flex-col overflow-hidden">
          {views.map((item, i) => (
            <li key={item.text} className={row}>
              <span className="relative ml-[10px] flex h-full">
                <Branch first={i === 0} last={i === views.length - 1} />
                {item.expander && (
                  <button aria-label={item.text} className="absolute top-[5px] -left-1 flex size-[9px] items-center justify-center border border-[#c4c4c4] bg-white">
                    <span className="absolute h-px w-[5px] bg-black" />
                    {item.expander === '+' && <span className="absolute h-[5px] w-px bg-black" />}
                  </button>
                )}
              </span>
              {item.checked && <span className="flex w-4 justify-center"><Glyph name="tick" className="size-3" /></span>}
              <Glyph name={item.icon} className="mr-[3px] size-4" />
              {item.text}
            </li>
          ))}
          {features.map((item, i) => (
            <li key={item.text} className={row}>
              <span className="ml-[29px] flex h-full"><Branch last={i === features.length - 1} /></span>
              <label className={clsx('flex items-center', item.dim && 'text-[#a0a0a0]', item.bold && 'font-bold')}>
                <span className="relative mr-[3px] ml-0.5 size-3">
                  <input type="checkbox" defaultChecked className="peer block size-3 appearance-none border border-black bg-white" />
                  <svg viewBox="0 0 12 12" className="pointer-events-none absolute inset-0 size-3 opacity-0 peer-checked:opacity-100" fill="none">
                    <path d="M2 6l3 3L10 2.500" stroke="#10b828" strokeWidth="2.800" />
                  </svg>
                </span>
                <Glyph name={item.icon} className="mr-[3px] size-[15px]" />
                <span className="flex gap-[5px]">
                  {item.text.split(' ').map(part => <span key={part}>{part}</span>)}
                </span>
              </label>
            </li>
          ))}
          {Array.from({ length: 11 }, (_, i) => <li key={i} className={row} />)}
        </ul>
        <div className="flex h-4 shrink-0 items-center bg-[#f0f0f0]">
          <button aria-label="scroll left" className="flex w-[18px] justify-center">
            <svg viewBox="0 0 6 8" className="h-2 w-1.5" fill="none" stroke="#444" strokeWidth="1.600"><path d="M5 1L2 4l3 3" /></svg>
          </button>
          <div className="flex h-full flex-1"><span className="h-full w-1/2 bg-[#cdcdcd]" /></div>
          <button aria-label="scroll right" className="flex w-[18px] justify-center">
            <svg viewBox="0 0 6 8" className="h-2 w-1.5" fill="none" stroke="#444" strokeWidth="1.600"><path d="M1 1l3 3-3 3" /></svg>
          </button>
        </div>
      </div>
      <div className="mt-0.5 mr-2 mb-1.5 ml-1.5 h-[5px] shrink-0 border border-[#aaa] bg-[#d8d8d8]" />
    </section>
  )
}

const rail = [
  ['navGear', 'h-6 mb-4 -ml-1'],
  ['navAssembly', 'h-[42px]'],
  ['mirror', 'h-[42px]'],
  ['navPart', 'h-11 active'],
  ['navBooks', 'h-[42px] mb-[7px]'],
  ['navInfo', 'h-[54px]'],
  ['navWeb', 'h-[54px]'],
  ['clock', 'h-12'],
  ['navPalette', 'h-[42px]'],
  ['navScene', 'h-[42px]'],
  ['navTools', 'h-[42px]'],
  ['navMedia', 'h-[42px]']
]

function ResourceBar () {
  return (
    <nav className="flex w-[21px] shrink-0 flex-col overflow-hidden bg-[#dcdcdc] shadow-[inset_-1px_0_0_#a8a8a8]">
      {rail.map(([name, size]) => (
        <button
          key={name}
          aria-label={name}
          className={clsx('flex w-full shrink-0 items-center justify-end pr-[3px]', size, size.includes('active') && 'border-y border-[#a8a8a8] bg-white')}
        >
          <Glyph name={name} />
        </button>
      ))}
    </nav>
  )
}

function Model () {
  const edge = { stroke: '#2c2410', strokeWidth: 1, strokeLinejoin: 'round' as const }
  return (
    <svg viewBox="239 151 955 596" preserveAspectRatio="xMinYMin slice" fill="none" className="absolute inset-0 h-full w-full" aria-label="model">
      <defs>
        <linearGradient id="barrel" x1="0" y1="0" x2="1" y2="0">
          <stop offset="0" stopColor="#a86a00" />
          <stop offset=".25" stopColor="#8a5200" />
          <stop offset=".6" stopColor="#6e4000" />
          <stop offset="1" stopColor="#945a00" />
        </linearGradient>
        <linearGradient id="grip" gradientUnits="userSpaceOnUse" x1="930" y1="409" x2="937" y2="459">
          <stop offset="0" stopColor="#ffae00" />
          <stop offset=".32" stopColor="#ffd814" />
          <stop offset=".6" stopColor="#ff9d00" />
          <stop offset=".82" stopColor="#d07800" />
          <stop offset="1" stopColor="#6c3c00" />
        </linearGradient>
        <radialGradient id="shine" gradientUnits="userSpaceOnUse" cx="950" cy="425" r="26" gradientTransform="rotate(-6 950 425) translate(0 297.500) scale(1 .3)">
          <stop offset="0" stopColor="#ffff3c" />
          <stop offset="1" stopColor="#ffff3c" stopOpacity="0" />
        </radialGradient>
        <linearGradient id="neck" gradientUnits="userSpaceOnUse" x1="850" y1="432" x2="855" y2="462">
          <stop offset="0" stopColor="#ffaa00" />
          <stop offset=".32" stopColor="#ffd81c" />
          <stop offset=".6" stopColor="#f79a00" />
          <stop offset="1" stopColor="#8c5200" />
        </linearGradient>
        <linearGradient id="collar" gradientUnits="userSpaceOnUse" x1="815" y1="427" x2="823" y2="478">
          <stop offset="0" stopColor="#ffb400" />
          <stop offset=".35" stopColor="#ffe31e" />
          <stop offset=".65" stopColor="#e08a00" />
          <stop offset="1" stopColor="#6c3e00" />
        </linearGradient>
      </defs>

      {/* handle */}
      <path fill="url(#grip)" d="M889 426C908 415 932 407 963 411C974 411 980 422 979.500 432C979 439 976 443 971 446C948 456 920 463 894 456Q897 441 889 426Z" />
      <ellipse cx="950" cy="425" rx="26" ry="8" transform="rotate(-6 950 425)" fill="url(#shine)" />
      <path {...edge} d="M889 426Q897 441 894 456M963 411Q974 423 971 446" />
      <path fill="url(#neck)" d="M819 426C832 436 845 437 858 436.500C872 436 881 430 889 426Q897 441 894 456C880 451 865 453 853 456C841 460 834 470 829 477Q836 450 819 426Z" />
      <path fill="url(#collar)" d="M804 429L819 426.500Q838 448 828 477L812 480Z" />
      <path {...edge} d="M804 429L819 426.500Q836 448 829 477L812 479" />

      {/* arm */}
      <path {...edge} fill="#ffcc00" d="M588 444L799 424L814 454L588 507L600 470Z" />
      <path {...edge} fill="#8f5600" d="M588 507L814 454L811 486L584 538Z" />
      <path {...edge} fill="#7d4a00" d="M607 452L797 435.500Q804 435 805 438L804 443L798 442L613 460Z" />
      <path {...edge} d="M797 436L798 442L806 444M805 430L809 443" />
      <path {...edge} d="M613 460L801 443Q808 443 804 446L630 486Q620 488 615 482" />

      {/* boss */}
      <path fill="url(#barrel)" d="M522.500 467L518.500 514C519 531 541 546 570 546Q591 546 603 535L584 538L588 507Q611 500 616 480Z" />
      <path {...edge} d="M522.500 467L518.500 514C519 531 541 546 570 546Q591 546 603 535" />
      <path {...edge} fill="#dd9f00" d="M616 478Q617 496 588 507Q600 501 616 478Z" />
      <path {...edge} d="M588 507L584.500 537" />
      <ellipse {...edge} cx="569.500" cy="471" rx="47" ry="31" transform="rotate(5 569.500 471)" fill="#ffcc00" />
      <path {...edge} fill="#8f5600" d="M560 451L599 467L579 492L540 476.500Z" />
      <path fill="#b87400" d="M560 451L540 476.500L556 483L558.500 473Z" />
      <path {...edge} d="M560 451L558.500 473L556 483M560 451L540 476.500L579 492" />

      <g stroke="#3d5cff" strokeWidth="2">
        <path d="M520 490C522 510 542 525 570 524.500Q580 524 590 522L812 470" />
        <path d="M519 507C521 526 544 540 570 540Q580 540 592 536.500L811 486" />
        <path d="M551 481L558.500 473L586 483.500" strokeWidth="1.500" />
      </g>
    </svg>
  )
}

function Triad () {
  return (
    <svg viewBox="270 655 64 48" className="absolute bottom-[43px] left-[31px] h-12 w-16 font-[Liberation_Sans]" fill="none">
      <path d="M286 665l19-3 6 13-2 13-20 4-5-10z" fill="#d4d4d4" stroke="#a8a8a8" />
      <path d="M285 681l20-4 6-2M305 662l0 15-3 13M286 665l4 14" stroke="#b8b8b8" />
      <path d="M290 693l22-4" stroke="#d03030" strokeWidth="2" />
      <path d="M312 686l11 2-11 4z" fill="#d03030" />
      <path d="M288 691l-6-13" stroke="#30a040" strokeWidth="2" />
      <path d="M279 671l6 7-4 2z" fill="#30a040" />
      <path d="M290 692l1-18" stroke="#1030b0" strokeWidth="3" />
      <path d="M292 667l3 9h-6z" fill="#1030b0" />
      <circle cx="290" cy="693" r="4" fill="#b8b8b8" stroke="#888" strokeWidth=".5" />
      <g fontSize="12">
        <text x="274" y="672" fill="#30a040">Y</text>
        <text x="289" y="669" fill="#1848f0">Z</text>
        <text x="323" y="692" fill="#d03030">X</text>
      </g>
    </svg>
  )
}

const strip = 'flex h-[34px] shrink-0 items-center overflow-hidden border-b border-[#d9d9d9]'

export default function App () {
  return (
    <div className="flex h-screen flex-col overflow-hidden bg-white font-['Noto_Sans','Noto_Sans_CJK_SC',sans-serif] text-[12px] text-black">
      <div className="flex h-[17px] shrink-0 items-end overflow-hidden border-b border-[#d9d9d9]">
        <div className="flex h-[34px] shrink-0 items-center">
          <Bar grip={false} className="w-[578px] -ml-[5px]">
            <Tools items="start" />
            <span className="w-6.5 shrink-0 pt-0.5 pl-0.5">启动</span>
            <Tools items="^ newFile open save | cut copy paste | undo ^ redo | view ^ | diamond |" />
            <div className="relative ml-0.5 h-[22px] w-[125px] shrink-0">
              <input aria-label="command finder" defaultValue="查找命令" className="h-full w-full border border-[#8a8a8a] bg-white px-0.5 text-[11px]" />
              <svg viewBox="0 0 16 16" className="absolute right-0 bottom-0.5 size-4" fill="none" stroke="#333"><path d="M2 12l6-6q0-4 4-4t3 4-5 4l-6 5z" /></svg>
            </div>
            <div className="ml-1 h-full"><Caret low /></div>
          </Bar>
          <Bar><Tools items="fit ^ laptop ^ shaded ^ clipA clipB ^ swatch ^ | exit exitGo v" /></Bar>
          <Bar><Tools items="layerList axes ^ | diamond wrench | goDiamond ^ | needles ^ measure" /></Bar>
        </div>
      </div>

      <div className={strip}>
        <Bar grip={false} className="-ml-1 w-[693px]">
          <div className="flex h-[30px] w-[43px] shrink-0 items-center border border-[#fbd36a] bg-[#fdf4d8]">
            <button aria-label="plane" className="flex h-full flex-1 items-center justify-end border-r border-[#fbd36a] pr-1"><Glyph name="plane" /></button>
            <span className="h-full w-2.5"><Caret /></span>
          </div>
          <Tools items="extrude revolve hole boss pocketPlate pocket | emboss bed pattern mirrorGeo unite ^ trimBox trimSheet split shell wrap | edgeBlend faceBlend chamfer" />
          <More />
        </Bar>
        <Bar className="w-[283px]">
          <Tools items="moveFace ^ pullFace ^ deleteFace copyFace ^ editSection ^ dimFace ^" />
          <More />
        </Bar>
        <Bar><Tools items="sheetA sheetB sheetC sheetD sheetE sheetF sheetG" /></Bar>
      </div>

      <div className={strip}>
        <Bar grip={false} className="-ml-[3px]"><Tools items="group layers layerList | tag | partOk paintOk boxOk | abc v" /></Bar>
        <Bar><Tools items="weldA weldB hand v" /></Bar>
        <Bar><Tools items="spring springB disc | springCut v" /></Bar>
        <Bar className="ml-[96px]">
          <Tools items="triangle grid folderPts folderRings note brush |" />
          <button className="flex h-full w-[31px] shrink-0 flex-col items-center justify-center font-[Liberation_Sans] text-[11px] leading-3 [-webkit-text-stroke:0.3px]">
            <svg viewBox="0 0 20 13" className="h-3 w-5" fill="#505860" stroke="#222"><path d="M2 2l6-1 2 6-5 3-4-3zM10 1l6 1 2 6-4 4-4-3z" /><circle cx="14" cy="9" r="2.500" fill="#90a8c8" /><circle cx="5" cy="7" r="2" fill="#90a8c8" /></svg>
            <span>10<span className="text-[#b03030]">H7</span></span>
          </button>
          <Tools items="v" />
        </Bar>
        <Bar><Tools items="lockA lockB v" /></Bar>
      </div>

      <div className={strip}>
        <Bar grip={false} className="-ml-1"><Tools items="clipOk clipTree clipTable datum v" /></Bar>
        <Bar>
          <Tools items="profileDim |" />
          <div className="ml-0.5 flex h-full">
            <Tolerance />
            <Tolerance lines={['±.05']} />
            <Tolerance lines={['+.05', '−.02']} />
            <Tolerance lines={['+.05', '−.00']} />
            <Tolerance lines={['+.00', '−.02']} />
            <Tolerance variant="boxed" />
            <Tolerance variant="paren" />
            <Tolerance main="10H7" tone="blue" />
            <Tolerance main="10H7" tone="blue" lines={['10.01', '10']} />
            <Tolerance main="10H7" tone="blue" lines={['0.015', '0']} />
            <Tolerance main="10" tone="blue" lines={['0.015', '0']} />
          </div>
          <Tools items="| radA radB | diaIn diaOut back v" />
        </Bar>
      </div>

      <div className="flex h-8 shrink-0 items-center overflow-hidden border-b border-[#8c9298]">
        <Combo label="selection filter" value="没有选择过滤器" className="-ml-[5px] mr-[7px] w-[132px]" />
        <Combo label="selection scope" value="整个装配" className="mr-[3px] w-[140px]" />
        <Snaps items="assyFilter | reset filter ^ undoSel brushSel | marquee ^ | roundBox cube | snapAll* end* mid* curve pole* intersect center* quadrant point* onCurve* onFace | gridSnap" />
      </div>

      <main className="flex min-h-0 flex-1">
        <ResourceBar />
        <PartNavigator />
        <div className="relative min-w-0 flex-1 overflow-hidden bg-linear-to-b from-[#b2b3b5] via-[#e2e3e5] via-70% to-[#e7e8ea]">
          <Model />
          <Triad />
        </div>
      </main>

      <footer className="flex h-[26px] shrink-0 items-start overflow-hidden">
        <div className="flex h-[34px] shrink-0 items-center">
          <Bar grip={false} className="-ml-1 w-[415px]">
            <Tools items="person ^ parts partsOff addPart ^ movePart mirror constrain | wrenchPart threeParts chain | boxNote" />
            <More />
          </Bar>
          <Bar>
            <Tools items="sketch flag" />
            <span className="mr-0.5 w-11 shrink-0 text-[11px] whitespace-nowrap text-[#a8a8a8]">完成草图</span>
            <Tools items="spline line arc circle fillet chamferLine rect poly plus offset ^ | trim extend corner | autoDim ^ | parallel symmetric goParallel ^ | sketchOff replace replace" />
          </Bar>
        </div>
      </footer>
    </div>
  )
}
